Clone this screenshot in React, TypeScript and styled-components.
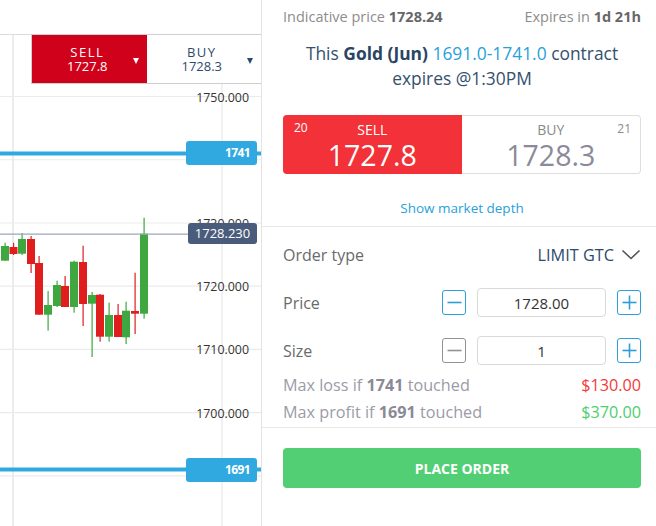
import React from 'react';
import styled, { createGlobalStyle } from 'styled-components';

const GlobalStyle = createGlobalStyle`
  html, body { margin: 0; padding: 0; background: #fff; }
  body { font-family: "Open Sans", "Noto Sans", sans-serif; }
  * { box-sizing: border-box; }
`;

const Screen = styled.div`
  display: flex;
  width: 656px;
  height: 526px;
  overflow: hidden;
  background: #fff;
`;

/* ---------------- chart ---------------- */

const ChartPane = styled.div`
  width: 262px;
  flex: none;
  height: 100%;
  display: flex;
  flex-direction: column;
  border-right: 1px solid #e3e3e3;
`;

const ChartTop = styled.div`
  height: 35px;
  flex: none;
  border-bottom: 1px solid #dcdcdc;
`;

const Plot = styled.div`
  position: relative;
  flex: 1;
`;

const PlotSvg = styled.svg`
  display: block;
`;

const Selector = styled.div`
  position: absolute;
  top: -1px;
  left: 31px;
  right: 0;
  height: 50px;
  display: flex;
  border: 1px solid #cfcfcf;
  border-right: none;
`;

const SelectorHalf = styled.div<{ $sell?: boolean }>`
  flex: 1;
  display: flex;
  align-items: center;
  background: ${(p) => (p.$sell ? '#d0021b' : '#fff')};
  color: ${(p) => (p.$sell ? '#fff' : '#2d4a6d')};
`;

const SelectorText = styled.div`
  flex: 1;
  padding-left: 10px;
  text-align: center;
  font-size: 13px;
  line-height: 14px;
`;

const SelectorSide = styled.div`
  letter-spacing: 1.5px;
`;

const Caret = styled.span<{ $color: string }>`
  width: 0;
  height: 0;
  margin: 4px 8px 0 0;
  border-left: 3.5px solid transparent;
  border-right: 3.5px solid transparent;
  border-top: 6px solid ${(p) => p.$color};
`;

const AxisLabel = styled.div`
  position: absolute;
  right: 12px;
  font-size: 12.4px;
  line-height: 14px;
  color: #333;
`;

const LevelTag = styled.div`
  position: absolute;
  right: 4px;
  width: 71px;
  height: 24px;
  border-radius: 3px;
  background: #2fa9e0;
  color: #fff;
  font-size: 12px;
  font-weight: 700;
  letter-spacing: -0.6px;
  line-height: 24px;
  text-align: right;
  padding-right: 7px;
`;

const CurrentTag = styled.div`
  position: absolute;
  right: 4px;
  width: 69px;
  height: 21px;
  border-radius: 3px;
  background: #4a5c7c;
  color: #fff;
  font-size: 13px;
  line-height: 21px;
  text-align: center;
`;

/* ---------------- ticket ---------------- */

const Ticket = styled.div`
  flex: 1;
  display: flex;
  flex-direction: column;
`;

const Section = styled.div`
  padding: 0 15px 0 21px;
  display: flex;
  flex-direction: column;
`;

const InfoRow = styled.div`
  margin-top: 6px;
  display: flex;
  justify-content: space-between;
  font-size: 14.5px;
  line-height: 22px;
  color: #8d8d8d;
  b { color: #676767; font-weight: 700; }
`;

const Contract = styled.div`
  margin-top: 13px;
  text-align: center;
  font-size: 17.4px;
  line-height: 25px;
  color: #34506f;
  b { color: #2a4563; font-weight: 700; }
`;

const Range = styled.span`
  color: #27a1da;
`;

const Quote = styled.div`
  margin-top: 24px;
  height: 59px;
  display: flex;
`;

const QuoteHalf = styled.div<{ $sell?: boolean }>`
  position: relative;
  flex: 1;
  display: flex;
  flex-direction: column;
  align-items: center;
  background: ${(p) => (p.$sell ? '#f23238' : '#fff')};
  border: ${(p) => (p.$sell ? 'none' : '1px solid #dedede')};
  border-left: none;
  padding-top: ${(p) => (p.$sell ? '6px' : '5px')};
  border-radius: ${(p) => (p.$sell ? '4px 0 0 4px' : '0 4px 4px 0')};
  color: ${(p) => (p.$sell ? '#fff' : '#8a8a8a')};
`;

const QuoteSide = styled.div`
  font-size: 14px;
  line-height: 18px;
`;

const QuotePrice = styled.div<{ $sell?: boolean }>`
  font-size: 28.5px;
  line-height: 32px;
  color: ${(p) => (p.$sell ? '#fff' : '#8b8a99')};
`;

const QuoteCount = styled.span<{ $right?: boolean }>`
  position: absolute;
  top: 5px;
  ${(p) => (p.$right ? 'right: 9px;' : 'left: 11px;')}
  font-size: 12px;
  line-height: 16px;
`;

const DepthLink = styled.a`
  margin: 24px 0 8px;
  text-align: center;
  font-size: 13.5px;
  line-height: 20px;
  color: #27a1da;
  text-decoration: none;
`;

const Divider = styled.div`
  height: 1px;
  background: #e8e8e8;
  flex: none;
`;

const FieldRow = styled.div<{ $gap: number }>`
  margin-top: ${(p) => p.$gap}px;
  height: 29px;
  display: flex;
  align-items: center;
  justify-content: space-between;
`;

const FieldLabel = styled.span`
  font-size: 16px;
  color: #6a6a6a;
`;

const OrderType = styled.span`
  display: flex;
  align-items: center;
  gap: 7px;
  font-size: 16.3px;
  color: #2c4a6b;
`;

const Stepper = styled.div`
  display: flex;
  align-items: center;
  gap: 11px;
`;

const StepButton = styled.button<{ $disabled?: boolean }>`
  width: 24px;
  height: 25px;
  padding: 0;
  display: flex;
  align-items: center;
  justify-content: center;
  background: #fff;
  border: 1.5px solid ${(p) => (p.$disabled ? '#929292' : '#2a9fd8')};
  border-radius: 3px;
  color: ${(p) => (p.$disabled ? '#929292' : '#2a9fd8')};
`;

const ValueInput = styled.input`
  width: 129px;
  height: 29px;
  border: 1px solid #dadada;
  border-radius: 4px;
  text-align: center;
  font-family: "Open Sans", "Noto Sans", sans-serif;
  font-size: 15px;
  color: #333;
  padding: 0;
  outline: none;
`;

const Risk = styled.div`
  margin-top: 7px;
  padding-bottom: 1px;
  display: flex;
  flex-direction: column;
`;

const RiskRow = styled.div`
  display: flex;
  justify-content: space-between;
  font-size: 16.2px;
  line-height: 27px;
  color: #9b9ba6;
  b { color: #8a8a96; font-weight: 700; }
`;

const RiskValue = styled.span<{ $color: string }>`
  color: ${(p) => p.$color};
`;

const PlaceOrder = styled.button`
  margin-top: 20px;
  height: 40px;
  border: none;
  border-radius: 4px;
  background: #52cf74;
  color: #fff;
  font-family: "Open Sans", "Noto Sans", sans-serif;
  font-size: 14px;
  font-weight: 700;
`;

/* ---------------- data ---------------- */

const TOP = 35;
const yOf = (p: number) => 96.5 + (1750 - p) * 6.324;

type Candle = { x: number; o: number; c: number; h: number; l: number; up: boolean };
const candles: Candle[] = [
  { x: 1, o: 246, c: 260.7, h: 242.7, l: 260.7, up: true },
  { x: 9.5, o: 247, c: 254, h: 242.7, l: 255, up: false },
  { x: 18, o: 239, c: 253.7, h: 233, l: 255, up: true },
  { x: 27, o: 239, c: 264, h: 236, l: 273, up: false },
  { x: 35, o: 263, c: 314.7, h: 256, l: 314.7, up: false },
  { x: 44, o: 305, c: 314.7, h: 291, l: 330.7, up: true },
  { x: 53, o: 285, c: 306, h: 280.7, l: 307, up: true },
  { x: 61, o: 286, c: 307, h: 276, l: 307, up: false },
  { x: 70, o: 261.7, c: 307, h: 260.7, l: 312.7, up: true },
  { x: 79, o: 262, c: 304, h: 245.7, l: 326, up: false },
  { x: 88, o: 295, c: 303.7, h: 292, l: 357, up: true },
  { x: 96, o: 294.7, c: 336.7, h: 294, l: 341.7, up: false },
  { x: 105, o: 315, c: 336.7, h: 302.7, l: 341.7, up: true },
  { x: 114, o: 315, c: 337, h: 304, l: 337, up: false },
  { x: 122, o: 310.7, c: 337.3, h: 301.7, l: 344, up: true },
  { x: 131, o: 311, c: 313.7, h: 272.7, l: 334, up: false },
  { x: 140, o: 233.7, c: 313.7, h: 217.7, l: 318.7, up: true },
];

const gridLevels = [1750, 1740, 1730, 1720, 1710, 1700, 1690];
const axisLabels = [1750, 1730, 1720, 1710, 1700];

const Minus = () => (
  <svg width="15" height="15" viewBox="0 0 15 15">
    <line x1="0.5" y1="7.5" x2="14.5" y2="7.5" stroke="currentColor" strokeWidth="1.6" />
  </svg>
);
const Plus = () => (
  <svg width="15" height="15" viewBox="0 0 15 15">
    <line x1="0.5" y1="7.5" x2="14.5" y2="7.5" stroke="currentColor" strokeWidth="1.6" />
    <line x1="7.5" y1="0.5" x2="7.5" y2="14.5" stroke="currentColor" strokeWidth="1.6" />
  </svg>
);
const Chevron = () => (
  <svg width="20" height="11" viewBox="0 0 20 11">
    <polyline points="1.5,1.5 10,9.5 18.5,1.5" fill="none" stroke="#555" strokeWidth="1.6" />
  </svg>
);

export default function App() {
  return (
    <Screen>
      <GlobalStyle />
      <ChartPane>
        <ChartTop />
        <Plot>
          <PlotSvg width={261} height={491} viewBox={`0 ${TOP} 261 491`}>
            {gridLevels.map((p) => (
              <line key={p} x1={0} x2={261} y1={yOf(p)} y2={yOf(p)} stroke="#ebebeb" strokeWidth={1.2} />
            ))}
            <line x1={13} x2={13} y1={TOP} y2={526} stroke="#ececec" strokeWidth={2} />
            <line x1={222} x2={222} y1={84} y2={526} stroke="#ececec" strokeWidth={1.5} />
            <line x1={0} x2={261} y1={yOf(1741)} y2={yOf(1741)} stroke="#2fa9e0" strokeWidth={4} />
            <line x1={0} x2={261} y1={yOf(1691)} y2={yOf(1691)} stroke="#2fa9e0" strokeWidth={4} />
            {candles.map((k, i) => {
              const col = k.up ? '#3ea73f' : '#e11e1e';
              return (
                <g key={i} fill={col}>
                  <rect x={k.x + 3.5} y={k.h} width={1.2} height={k.l - k.h} />
                  <rect x={k.x} y={k.o} width={8} height={k.c - k.o} />
                </g>
              );
            })}
            <line x1={0} x2={190} y1={yOf(1728.23)} y2={yOf(1728.23)} stroke="#9ca7b8" strokeWidth={1.2} />
          </PlotSvg>

          {axisLabels.map((p) => (
            <AxisLabel key={p} style={{ top: yOf(p) - 6 - TOP }}>
              {p.toFixed(3)}
            </AxisLabel>
          ))}

          <LevelTag style={{ top: yOf(1741) - 12 - TOP }}>1741</LevelTag>
          <LevelTag style={{ top: yOf(1691) - 12 - TOP }}>1691</LevelTag>
          <CurrentTag style={{ top: yOf(1728.23) - 11 - TOP }}>1728.230</CurrentTag>

          <Selector>
            <SelectorHalf $sell>
              <SelectorText>
                <SelectorSide>SELL</SelectorSide>
                <div>1727.8</div>
              </SelectorText>
              <Caret $color="#fff" />
            </SelectorHalf>
            <SelectorHalf>
              <SelectorText>
                <SelectorSide>BUY</SelectorSide>
                <div>1728.3</div>
              </SelectorText>
              <Caret $color="#2d4a6d" />
            </SelectorHalf>
          </Selector>
        </Plot>
      </ChartPane>

      <Ticket>
        <Section>
          <InfoRow>
            <span>
              Indicative price <b>1728.24</b>
            </span>
            <span>
              Expires in <b>1d 21h</b>
            </span>
          </InfoRow>
          <Contract>
            This <b>Gold (Jun)</b> <Range>1691.0-1741.0</Range> contract
            <br />
            expires @1:30PM
          </Contract>
          <Quote>
            <QuoteHalf $sell>
              <QuoteCount>20</QuoteCount>
              <QuoteSide>SELL</QuoteSide>
              <QuotePrice $sell>1727.8</QuotePrice>
            </QuoteHalf>
            <QuoteHalf>
              <QuoteCount $right>21</QuoteCount>
              <QuoteSide>BUY</QuoteSide>
              <QuotePrice>1728.3</QuotePrice>
            </QuoteHalf>
          </Quote>
          <DepthLink href="#">Show market depth</DepthLink>
        </Section>
        <Divider />
        <Section>
          <FieldRow $gap={13}>
            <FieldLabel>Order type</FieldLabel>
            <OrderType>
              LIMIT GTC
              <Chevron />
            </OrderType>
          </FieldRow>
          <FieldRow $gap={19}>
            <FieldLabel>Price</FieldLabel>
            <Stepper>
              <StepButton>
                <Minus />
              </StepButton>
              <ValueInput readOnly value="1728.00" />
              <StepButton>
                <Plus />
              </StepButton>
            </Stepper>
          </FieldRow>
          <FieldRow $gap={19}>
            <FieldLabel>Size</FieldLabel>
            <Stepper>
              <StepButton $disabled>
                <Minus />
              </StepButton>
              <ValueInput readOnly value="1" />
              <StepButton>
                <Plus />
              </StepButton>
            </Stepper>
          </FieldRow>
          <Risk>
            <RiskRow>
              <span>
                Max loss if <b>1741</b> touched
              </span>
              <RiskValue $color="#f33a3a">$130.00</RiskValue>
            </RiskRow>
            <RiskRow>
              <span>
                Max profit if <b>1691</b> touched
              </span>
              <RiskValue $color="#4ccf6d">$370.00</RiskValue>
            </RiskRow>
          </Risk>
        </Section>
        <Divider />
        <Section>
          <PlaceOrder>PLACE ORDER</PlaceOrder>
        </Section>
      </Ticket>
    </Screen>
  );
}
